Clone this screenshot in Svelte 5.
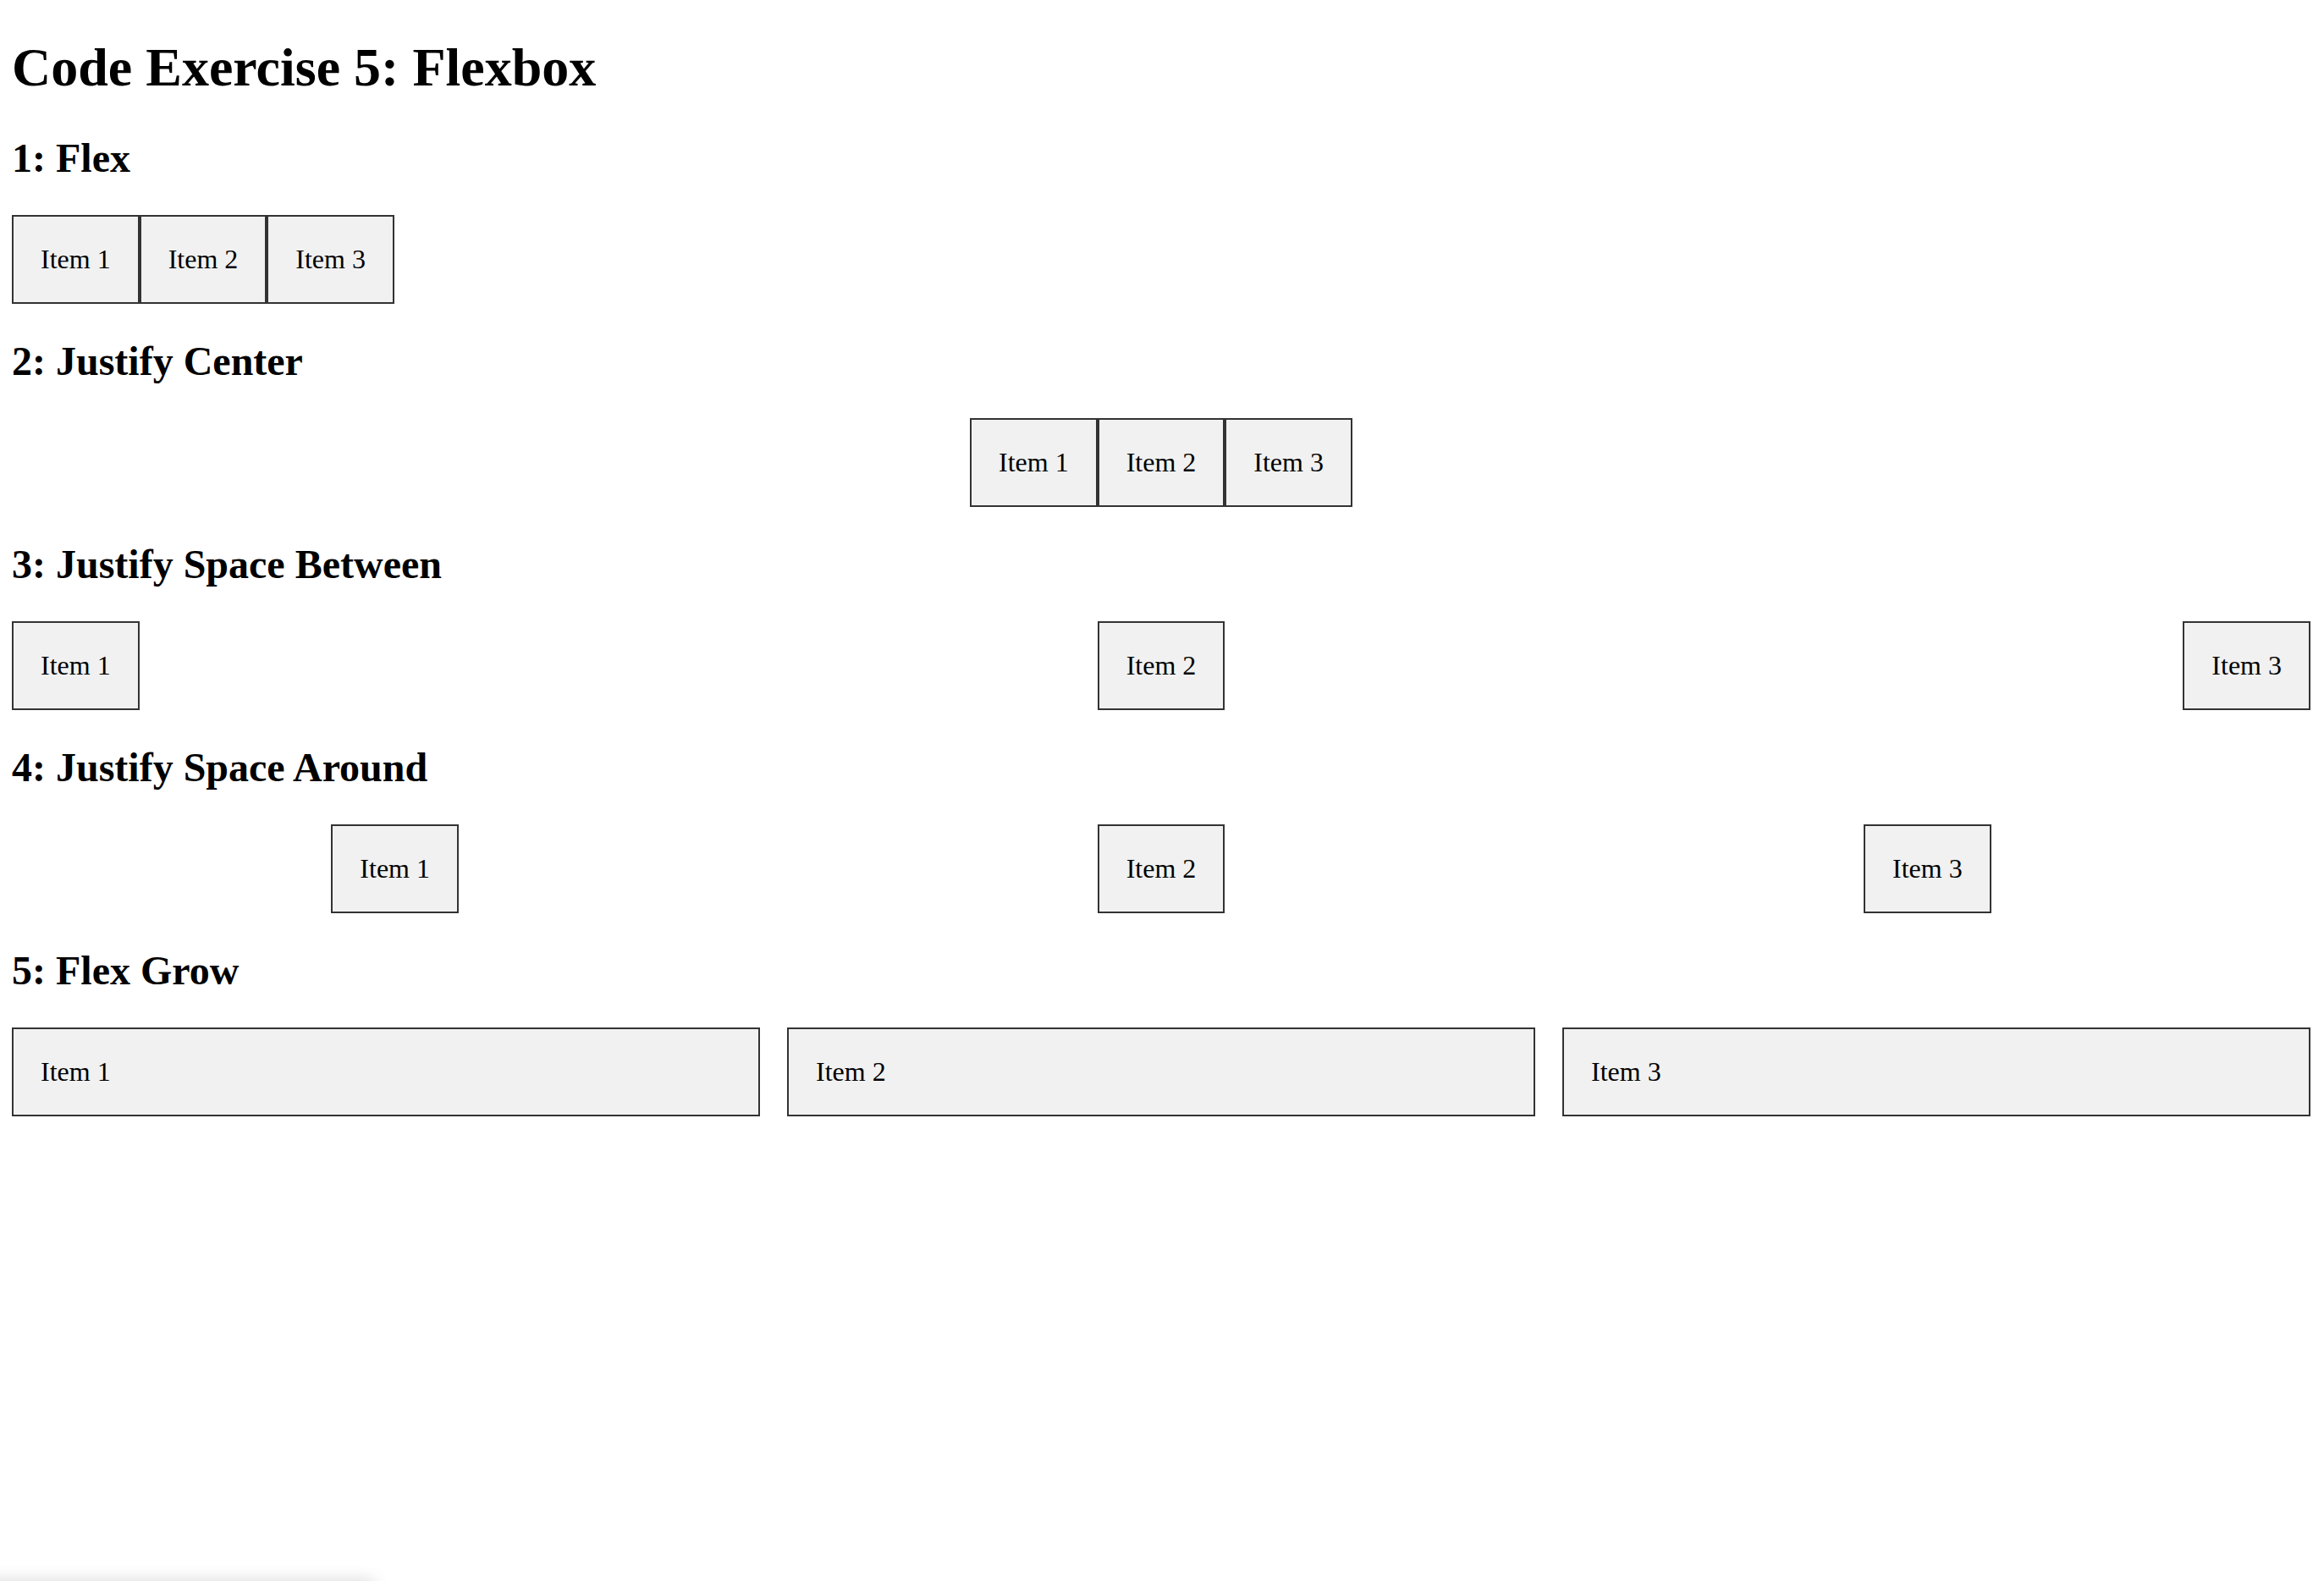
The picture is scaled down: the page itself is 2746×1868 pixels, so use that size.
<script>
  const sections = [
    { title: '1: Flex', layout: 'start' },
    { title: '2: Justify Center', layout: 'center' },
    { title: '3: Justify Space Between', layout: 'between' },
    { title: '4: Justify Space Around', layout: 'around' },
    { title: '5: Flex Grow', layout: 'grow' }
  ];
  const items = ['Item 1', 'Item 2', 'Item 3'];
</script>

<main>
  <h1>Code Exercise 5: Flexbox</h1>
  {#each sections as section}
    <section>
      <h2>{section.title}</h2>
      <div class="row {section.layout}">
        {#each items as item}
          <div class="item">{item}</div>
        {/each}
      </div>
    </section>
  {/each}
</main>
<div class="status-shadow" aria-hidden="true"></div>

<style>
  :global(body) {
    margin: 0;
    background: #fff;
  }
  main {
    padding: 0 16px 0 14px;
    color: #000;
    font-family: "Liberation Serif", "Times New Roman", serif;
    font-size: 32px;
    line-height: 37px;
  }
  h1 {
    margin: 43px 0 42px;
    font-size: 64px;
    line-height: 74px;
  }
  h2 {
    margin: 40px 0;
    font-size: 48px;
    line-height: 55px;
  }
  .row {
    display: flex;
  }
  .item {
    padding: 32px;
    border: 2px solid #333;
    background: #f1f1f1;
  }
  .center {
    justify-content: center;
  }
  .between {
    justify-content: space-between;
  }
  .around {
    justify-content: space-around;
  }
  .grow {
    gap: 32px;
  }
  .grow .item {
    flex: 1;
  }
  /* Soft edge of a status bubble resting just below the window */
  .status-shadow {
    position: fixed;
    top: 100%;
    left: -20px;
    width: 462px;
    height: 40px;
    box-shadow: 0 0 20px rgba(0, 0, 0, 0.16);
  }
</style>
